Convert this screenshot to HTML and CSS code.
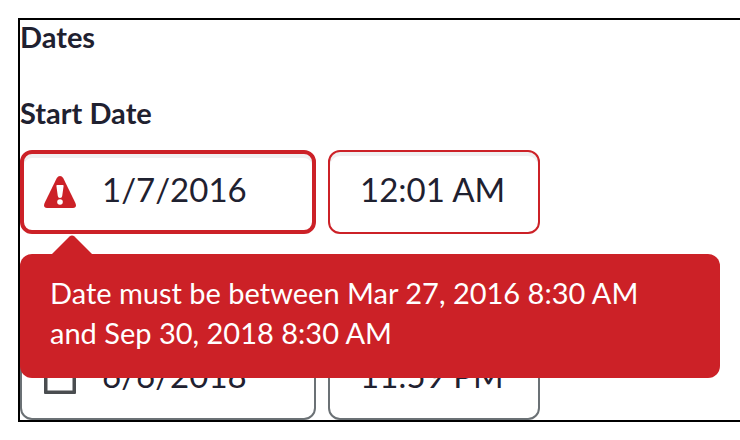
FILE: index.html
```html
<!DOCTYPE html>
<html lang="en">
<head>
<meta charset="utf-8">
<title>Dates</title>
<link rel="stylesheet" href="styles.css">
</head>
<body>
<form class="dates">
  <h2 class="heading">Dates</h2>
  <div class="group">
    <label class="label" for="start-date">Start Date</label>
    <div class="row">
      <div class="date">
        <input class="field field-date invalid focused" id="start-date" type="text" value="1/7/2016" aria-describedby="start-error" aria-invalid="true">
        <svg class="icon" viewBox="0 0 32 32" aria-hidden="true">
          <path fill="#cc2127" d="M12.800 1.900Q14 0 16 0t3.200 1.900l12.200 25.200Q33.200 32 29 32H3Q-1.200 32 .6 27.100z"/>
          <path fill="#fff" d="M13.200 9h5.600q1 0 .8 1l-1.400 10q-.2 2-2.200 2t-2.200-2l-1.400-10q-.2-1 .8-1z"/>
          <circle cx="16" cy="26" r="2.800" fill="#fff"/>
        </svg>
      </div>
      <input class="field field-time invalid" type="text" value="12:01 AM" aria-label="Start time">
      <div class="tooltip" id="start-error" role="alert">
        <svg class="arrow" viewBox="0 0 42 21" aria-hidden="true"><path fill="#cc2127" d="M0 21 18.500 2.500Q21 .5 23.500 2.500L42 21z"/></svg>
        Date must be between Mar 27, 2016 8:30 AM and Sep 30, 2018 8:30 AM
      </div>
    </div>
  </div>
  <div class="group">
    <label class="label" for="end-date">End Date</label>
    <div class="row">
      <div class="date">
        <input class="field field-date" id="end-date" type="text" value="6/6/2018">
        <svg class="icon" viewBox="0 0 32 32" aria-hidden="true">
          <path fill="#4a4d50" fill-rule="evenodd" d="M1 2h5V0h4v2h12V0h4v2h5q1 0 1 1v28q0 1-1 1H1q-1 0-1-1V3q0-1 1-1zm2.500 8v18.500h25V10z"/>
        </svg>
      </div>
      <input class="field field-time" type="text" value="11:59 PM" aria-label="End time">
    </div>
  </div>
</form>
</body>
</html>
```
FILE: styles.css
```css
* { box-sizing: border-box; }
body {
  margin: 18px 0 18px 18px;
  background: #fff;
  color: #1f2130;
  font-family: Lato, sans-serif;
}
.dates {
  border: 2px solid #000;
  border-right: 0;
}
.heading, .label {
  display: block;
  margin: 0;
  font-size: 29px;
  line-height: 34px;
  font-weight: 700;
}
.heading { margin-bottom: 42px; }
.label { margin-bottom: 20px; }
.group + .group { margin-top: 48px; }
.row {
  position: relative;
  display: flex;
  gap: 12px;
}
.date { position: relative; }
.field {
  display: block;
  height: 84px;
  margin: 0;
  padding: 0 0 6px 30px;
  border: 2px solid #6b7175;
  border-radius: 12px;
  background: #fff;
  box-shadow: inset 0 4px 0 #f0f0f1;
  color: inherit;
  font: 33px Lato, sans-serif;
  outline: 0;
}
.field-date {
  width: 296px;
  padding-left: 80px;
}
.field-time { width: 212px; }
.invalid { border-color: #cc2127; }
.focused {
  border-width: 4px;
  padding-left: 78px;
}
.icon {
  position: absolute;
  top: 26px;
  left: 24px;
  width: 32px;
  height: 32px;
}
.tooltip {
  position: absolute;
  z-index: 1;
  top: 104px;
  left: 0;
  right: 20px;
  padding: 19px 40px 25px 30px;
  border-radius: 12px;
  background: #cc2127;
  color: #fff;
  font-size: 29px;
  line-height: 40px;
}
.arrow {
  position: absolute;
  top: -20px;
  left: 31px;
  width: 42px;
  height: 21px;
}
```
